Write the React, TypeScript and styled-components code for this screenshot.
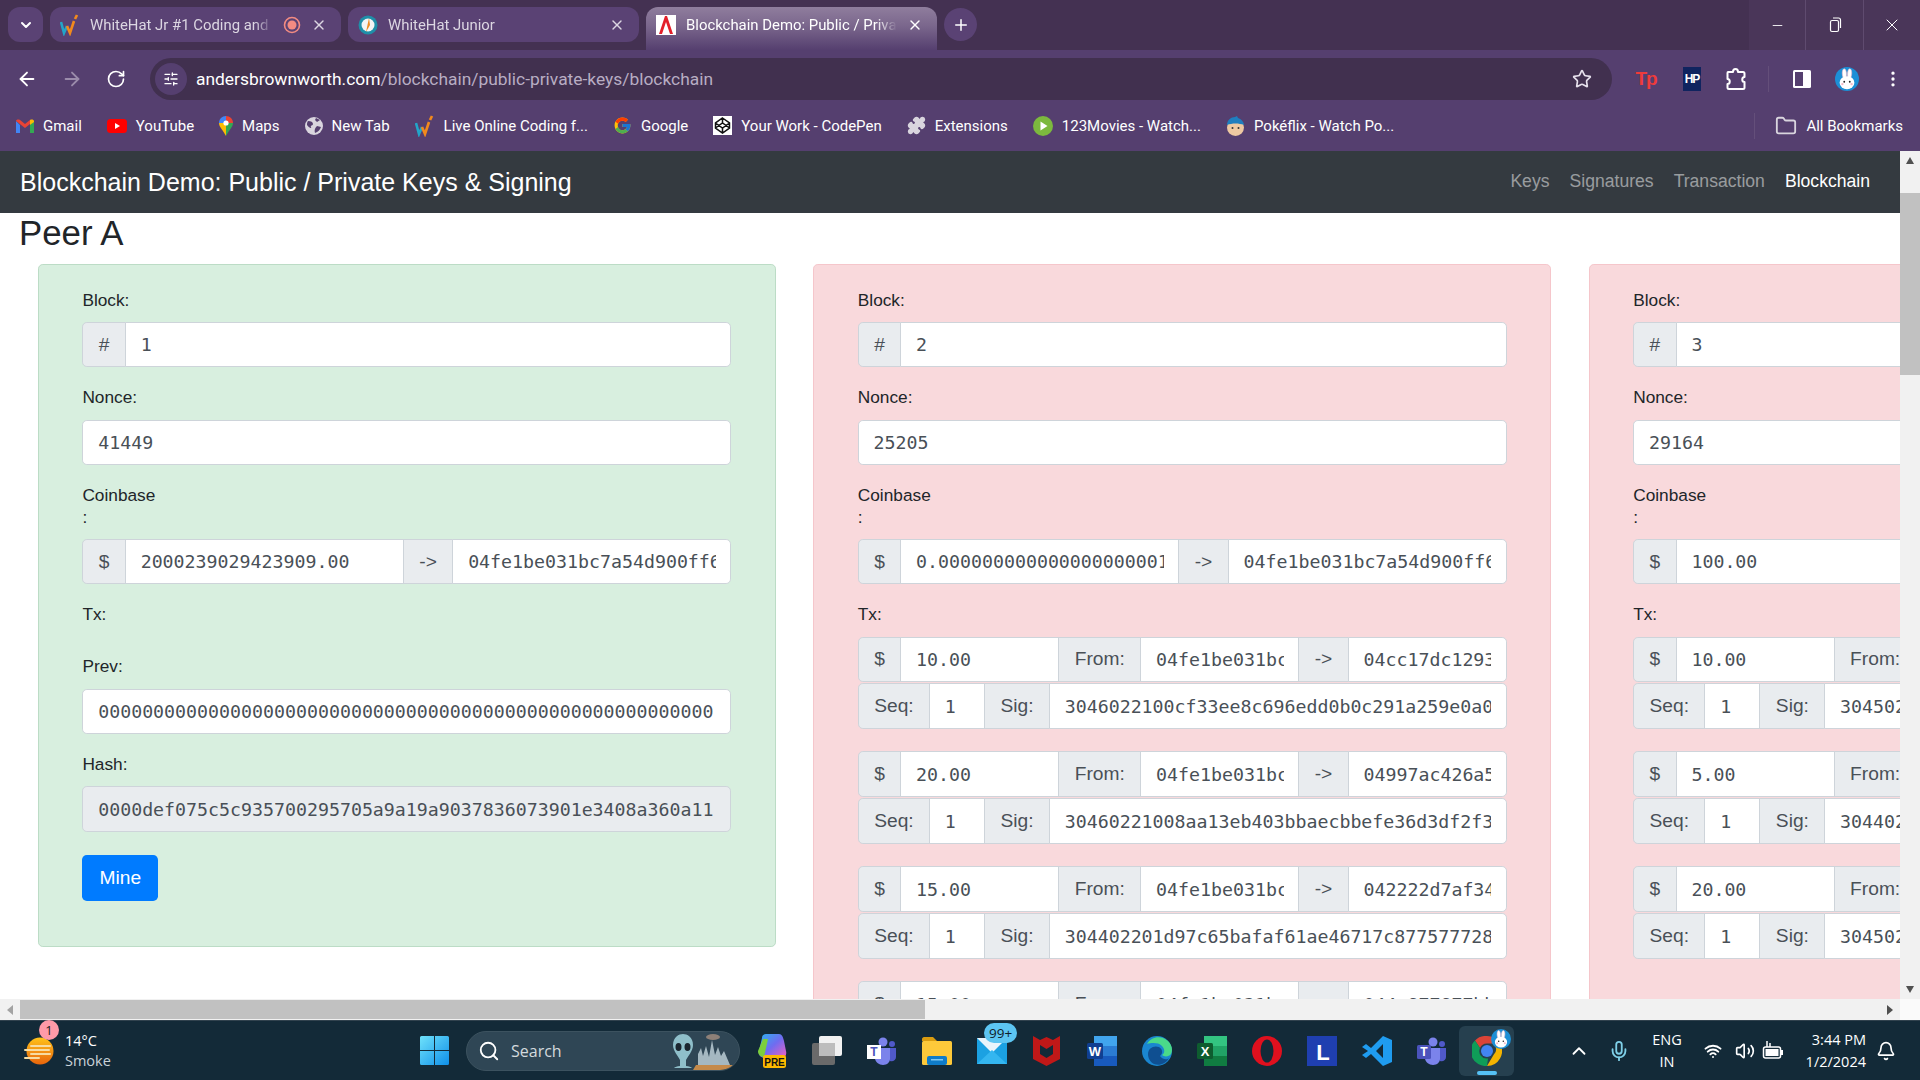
import React, { FC, ReactNode } from 'react';
import styled, { createGlobalStyle } from 'styled-components';
import {
  ArrowLeft,
  ArrowRight,
  Bell,
  ChevronDown,
  ChevronUp,
  Folder,
  Mic,
  Minus,
  MoreVertical,
  Plus,
  Puzzle,
  RotateCw,
  Search,
  SlidersHorizontal,
  Star,
  Volume2,
  Wifi,
  X,
} from 'lucide-react';
import { FcGoogle } from 'react-icons/fc';

const GlobalStyle = createGlobalStyle`
  html, body {
    margin: 0;
    padding: 0;
    overflow: hidden;
  }
  * {
    box-sizing: border-box;
  }
`;

const UI_FONT = `'Open Sans', 'Noto Sans', sans-serif`;
const CHROME_FONT = `Roboto, 'Open Sans', sans-serif`;
const WEB_FONT = `'Liberation Sans', Arial, sans-serif`;
const MONO_FONT = `'DejaVu Sans Mono', monospace`;

// ---- small drawings ----

const WhiteHatIcon: FC = () => (
  <svg width="20" height="22" viewBox="0 0 20 22">
    <path d="M1 8l3 11 3-7" fill="none" stroke="#22a5c9" strokeWidth="2.6" />
    <path d="M7 12l3 7 4-12" fill="none" stroke="#f28a1c" strokeWidth="2.6" />
    <path d="M15 5l2-4" fill="none" stroke="#f28a1c" strokeWidth="2.6" />
  </svg>
);

const JuniorIcon: FC = () => (
  <svg width="20" height="20" viewBox="0 0 20 20">
    <circle cx="10" cy="10" r="9.5" fill="#1f8fa8" />
    <circle cx="10" cy="10" r="6.5" fill="#f4f4f4" />
    <path d="M11 3l-3 14 4-7z" fill="#ee8a22" />
  </svg>
);

const AndersIcon: FC = () => (
  <svg width="20" height="20" viewBox="0 0 20 20">
    <rect width="20" height="20" fill="#fff" />
    <path d="M3 19L9 1h2l6 18h-3L10 7 6 19z" fill="#e3202a" />
  </svg>
);

const RecordIcon: FC = () => (
  <svg width="18" height="18" viewBox="0 0 18 18">
    <circle cx="9" cy="9" r="7.5" fill="none" stroke="#f28b82" strokeWidth="1.6" />
    <circle cx="9" cy="9" r="4.5" fill="#f28b82" />
  </svg>
);

const GmailIcon: FC = () => (
  <svg width="18" height="14" viewBox="0 0 18 14">
    <path d="M0 2v12h4V6z" fill="#4285f4" />
    <path d="M14 14h4V2l-4 4z" fill="#34a853" />
    <path d="M0 2l9 7 5-4V1l-5 4-5-4C2 0 0 1 0 2z" fill="#ea4335" />
    <path d="M14 1v5l4-3V2c0-1-2-2-4-1z" fill="#fbbc04" />
  </svg>
);

const YouTubeIcon: FC = () => (
  <svg width="20" height="14" viewBox="0 0 20 14">
    <rect width="20" height="14" rx="3.5" fill="#f00" />
    <path d="M8 4l5 3-5 3z" fill="#fff" />
  </svg>
);

const MapsIcon: FC = () => (
  <svg width="14" height="20" viewBox="0 0 14 20">
    <path d="M7 0C3 0 0 3 0 7l7 0z" fill="#4285f4" />
    <path d="M7 0c4 0 7 3 7 7H7z" fill="#ea4335" />
    <path d="M0 7c0 4 4 7 7 13V7z" fill="#fbbc04" />
    <path d="M14 7c0 4-4 7-7 13V7z" fill="#34a853" />
    <circle cx="7" cy="7" r="2.6" fill="#fff" />
  </svg>
);

const GlobeIcon: FC = () => (
  <svg width="18" height="18" viewBox="0 0 18 18">
    <circle cx="9" cy="9" r="9" fill="#d9d5de" />
    <path d="M3 4c3 0 5 1 5 3S5 8 6 10s-2 1-4-2c0-1 0-3 1-4zM12 9l4 1c-1 3-3 5-6 6-1-3 0-5 2-7zM11 1l4 2-3 2-2-2z" fill="#553f6f" />
  </svg>
);

const CodePenIcon: FC = () => (
  <svg width="19" height="19" viewBox="0 0 19 19">
    <rect width="19" height="19" fill="#fff" />
    <path d="M9.5 2l7 5v5l-7 5-7-5V7zM2.5 7l7 5 7-5M2.5 12l7-5 7 5M9.5 2v5M9.5 12v5" fill="none" stroke="#111" strokeWidth="1.5" />
  </svg>
);

const MoviesIcon: FC = () => (
  <svg width="20" height="20" viewBox="0 0 20 20">
    <circle cx="10" cy="10" r="10" fill="#7cb93e" />
    <path d="M7.5 5.5l7 4.5-7 4.5z" fill="#fff" />
  </svg>
);

const PokeIcon: FC = () => (
  <svg width="19" height="20" viewBox="0 0 19 20">
    <circle cx="9.5" cy="11.5" r="8.5" fill="#eec9a2" />
    <path d="M1 9c0-5 4-8 8-8l2-1 1 2c3 1 6 4 6 7-5-2-12-2-17 0z" fill="#1f7ebf" />
    <circle cx="6.5" cy="12" r="1" fill="#333" />
    <circle cx="12.5" cy="12" r="1" fill="#333" />
  </svg>
);

const BunnyIcon: FC<{ size: number }> = ({ size }) => (
  <svg width={size} height={size} viewBox="0 0 26 26">
    <circle cx="13" cy="13" r="13" fill="#1c8fd6" />
    <path d="M9 12C7 7 8 2 10 2s3 5 2 10zM17 12c2-5 1-10-1-10s-3 5-2 10z" fill="#fff" stroke="#f3b7c6" strokeWidth=".7" />
    <ellipse cx="13" cy="17" rx="8" ry="7" fill="#fff" />
    <circle cx="10" cy="16" r="1" fill="#222" />
    <circle cx="16" cy="16" r="1" fill="#222" />
    <circle cx="8" cy="18.5" r="1.3" fill="#f7b9c8" />
    <circle cx="18" cy="18.5" r="1.3" fill="#f7b9c8" />
  </svg>
);

const RestoreIcon: FC = () => (
  <svg width="14" height="16" viewBox="0 0 14 16" fill="none" stroke="#fff" strokeWidth="1.2">
    <rect x="2.5" y="3.5" width="8" height="11" rx="1.5" />
    <path d="M5 1h5.500c1.200 0 2 .8 2 2v8" />
  </svg>
);

const SidePanelIcon: FC = () => (
  <svg width="18" height="20" viewBox="0 0 18 20">
    <rect x="0" y="1" width="18" height="18" rx="1.5" fill="#fff" />
    <rect x="2" y="3" width="8" height="14" fill="#553f6f" />
  </svg>
);

const ExtensionPiece: FC = () => (
  <svg width="22" height="24" viewBox="0 0 22 24" fill="none" stroke="#fff" strokeWidth="2" strokeLinejoin="round">
    <path d="M3 5h5c0-4 5-4 5 0h5c1 0 1.500.5 1.500 1.500V10c-3 0-3 5 0 5v5.500c0 1-.5 1.500-1.500 1.500H4c-1 0-1.500-.5-1.500-1.500V17c3 0 3-5 0-5V6c0-.5 0-1 .5-1z" />
  </svg>
);

const WeatherIcon: FC = () => (
  <svg width="32" height="30" viewBox="0 0 32 30">
    <defs>
      <linearGradient id="sun" x1="0" y1="0" x2="0" y2="1">
        <stop offset="0" stopColor="#ffc21a" />
        <stop offset="1" stopColor="#e8650c" />
      </linearGradient>
    </defs>
    <circle cx="16" cy="15" r="13.5" fill="url(#sun)" />
    <path d="M7 10h19M1 14h24M7 18h19M1 22h14" stroke="#f7dca2" strokeWidth="2" strokeLinecap="round" />
  </svg>
);

const WindowsIcon: FC = () => (
  <svg width="29" height="29" viewBox="0 0 29 29">
    <defs>
      <linearGradient id="win" x1="0" y1="0" x2="1" y2="1">
        <stop offset="0" stopColor="#6fe2fb" />
        <stop offset="1" stopColor="#0f8fe8" />
      </linearGradient>
    </defs>
    <path d="M0 1.5A1.5 1.5 0 0 1 1.500 0H14v14H0zM15 0h12.500A1.500 1.500 0 0 1 29 1.500V14H15zM0 15h14v14H1.500A1.500 1.500 0 0 1 0 27.500zM15 15h14v12.500a1.500 1.500 0 0 1-1.500 1.500H15z" fill="url(#win)" />
  </svg>
);

const AlienDoodle: FC = () => (
  <svg width="68" height="38" viewBox="0 0 68 38">
    <path d="M22 38l3-5h38l-5 5z" fill="#c58a4a" />
    <path d="M27 33V22l3-6 2 8 3-10 3 11 3-17 3 15 3-8 3 9 3-5 6 14z" fill="#b3c4cd" opacity=".9" />
    <ellipse cx="42" cy="5" rx="7" ry="3" fill="#8d8078" />
    <path d="M2 13C2 5 8 2 12 2s10 3 10 11c0 6-5 11-7 15v6c3 0 5 1 6 2H3c1-1 3-2 6-2v-6C7 24 2 19 2 13z" fill="#8fbfca" />
    <ellipse cx="7.500" cy="15" rx="3" ry="4" fill="#1b2630" />
    <ellipse cx="16.500" cy="15" rx="3" ry="4" fill="#1b2630" />
  </svg>
);

const Glyph: FC<{ x: string; y: string; size: string; weight?: number; fill: string; children: ReactNode }> = ({
  x,
  y,
  size,
  weight = 700,
  fill,
  children,
}) => (
  <text x={x} y={y} fontSize={size} fontWeight={weight} fill={fill} fontFamily="'Liberation Sans', sans-serif" textAnchor="middle">
    {children}
  </text>
);

const CopilotIcon: FC = () => (
  <svg width="30" height="36" viewBox="0 0 30 36">
    <defs>
      <linearGradient id="cop" x1="0" y1="0" x2="1" y2="1">
        <stop offset="0" stopColor="#2bb3f0" />
        <stop offset=".5" stopColor="#6f6cf0" />
        <stop offset="1" stopColor="#f45fc0" />
      </linearGradient>
    </defs>
    <path d="M9 1h13c3 0 4 3 5 7l2 10c1 4-1 7-4 7H8c-4 0-7-3-6-7L5 5c0-3 2-4 4-4z" fill="url(#cop)" />
    <path d="M1 18l5-12 5 0-4 18c-3 0-6-2-6-6z" fill="#7ccf3c" />
    <rect x="6" y="22" width="23" height="13" rx="2.500" fill="#fdb900" />
    <Glyph x="17.500" y="32.500" size="10" weight={800} fill="#111">PRE</Glyph>
  </svg>
);

const WidgetsIcon: FC = () => (
  <svg width="30" height="30" viewBox="0 0 30 30">
    <rect y="7" width="23" height="22" rx="2" fill="#6a6a6a" />
    <rect x="7" width="23" height="20" rx="2" fill="#f1f1f1" />
    <rect x="7" y="7" width="16" height="13" fill="#bdbdbd" />
  </svg>
);

const TeamsIcon: FC<{ light?: boolean }> = ({ light }) => (
  <svg width="30" height="28" viewBox="0 0 30 28">
    <circle cx="16" cy="5" r="4.500" fill="#7b83eb" />
    <circle cx="25" cy="7" r="3" fill="#5059c9" />
    <path d="M20 11h9v9c0 3-3 5-6 4z" fill="#5059c9" />
    <path d="M8 11h15v11c0 3-3 6-7 6s-8-3-8-7z" fill="#7b83eb" />
    <rect y="8" width="14" height="14" rx={light ? 0 : 1.500} fill={light ? '#fff' : '#4b53bc'} />
    <Glyph x="7" y="19" size="12" fill={light ? '#4b53bc' : '#fff'}>T</Glyph>
  </svg>
);

const ExplorerIcon: FC = () => (
  <svg width="30" height="28" viewBox="0 0 30 28">
    <path d="M0 2c0-1 1-2 2-2h9l4 4H0z" fill="#d99c10" />
    <rect y="4" width="30" height="24" rx="1.500" fill="#fdc93a" />
    <rect x="5" y="19" width="20" height="9" rx="2" fill="#0f7cc9" />
    <rect x="9" y="22" width="12" height="1.500" fill="#7fc8f3" />
  </svg>
);

const MailIcon: FC = () => (
  <svg width="30" height="26" viewBox="0 0 30 26">
    <rect width="30" height="26" fill="#1ba1e2" />
    <path d="M0 0h30L15 15z" fill="#e9f4fb" />
    <path d="M0 26L15 12l15 14z" fill="#34b6f0" />
  </svg>
);

const McAfeeIcon: FC = () => (
  <svg width="27" height="30" viewBox="0 0 27 30">
    <path d="M0 0l7 4 6.500-3L20 4l7-4v23l-13.500 7L0 23zM7 9v9l6.500 4 6.500-4V9l-6.500 4z" fill="#c01818" fillRule="evenodd" />
  </svg>
);

const OfficeTile: FC<{ shades: string[]; badge: string; letter: string }> = ({ shades, badge, letter }) => (
  <svg width="30" height="30" viewBox="0 0 30 30">
    <rect x="7" width="23" height="10" fill={shades[0]} />
    <rect x="7" y="10" width="23" height="10" fill={shades[1]} />
    <rect x="7" y="20" width="23" height="10" fill={shades[2]} />
    <rect y="7" width="16" height="16" rx="1.500" fill={badge} />
    <Glyph x="8" y="19.500" size="13" fill="#fff">{letter}</Glyph>
  </svg>
);

const EdgeIcon: FC = () => (
  <svg width="30" height="30" viewBox="0 0 30 30">
    <circle cx="15" cy="15" r="15" fill="#1a86d0" />
    <path d="M5 8C9 0 20-1 26 5c4 4 5 9 3 13-2 3-7 3-9 1 3-2 3-6 0-9-4-4-11-3-15-2z" fill="#4ad98a" />
    <path d="M6 18c0-6 6-9 11-7 4 2 4 7 1 9 3 4 7 4 9 2-3 6-10 8-15 6-4-2-6-6-6-10z" fill="#0f4f91" />
  </svg>
);

const OperaIcon: FC = () => (
  <svg width="30" height="30" viewBox="0 0 30 30">
    <circle cx="15" cy="15" r="15" fill="#e0101e" />
    <ellipse cx="15" cy="15" rx="6.500" ry="11.500" fill="#132a38" />
  </svg>
);

const LTile: FC = () => (
  <svg width="30" height="30" viewBox="0 0 30 30">
    <rect width="30" height="30" fill="#1f3fb0" />
    <Glyph x="16" y="24" size="22" fill="#fff">L</Glyph>
  </svg>
);

const VsCodeIcon: FC = () => (
  <svg width="30" height="30" viewBox="0 0 30 30">
    <path d="M21 0l9 4v22l-9 4-12-12-5 4-4-3 6-4-6-4 4-3 5 4zM21 8l-7 7 7 7z" fill="#1f9cf0" fillRule="evenodd" />
  </svg>
);

const ChromeIcon: FC = () => (
  <svg width="30" height="30" viewBox="0 0 30 30">
    <path d="M15 0a15 15 0 0 1 13 7.500H15a7.500 7.500 0 0 0-7 4.500L3 4.500A15 15 0 0 1 15 0z" fill="#db4437" />
    <path d="M28 7.500A15 15 0 0 1 15 30l6.500-11a7.500 7.500 0 0 0 0-11.500z" fill="#f4b400" />
    <path d="M3 4.500l5 7.500a7.500 7.500 0 0 0 8 10.500L15 30A15 15 0 0 1 3 4.500z" fill="#0f9d58" />
    <circle cx="15" cy="15" r="6" fill="#4285f4" />
  </svg>
);

const BatteryIcon: FC = () => (
  <svg width="22" height="22" viewBox="0 0 22 22">
    <rect x="1.500" y="7" width="17" height="11" rx="2" fill="none" stroke="#fff" strokeWidth="1.500" />
    <rect x="3.500" y="9" width="13" height="7" fill="#fff" />
    <rect x="19" y="10" width="2" height="5" fill="#fff" />
    <path d="M5 1v6M8 3v4" stroke="#fff" strokeWidth="1.500" />
  </svg>
);

const ScrollArrow: FC<{ $dir: 'up' | 'down' | 'left' | 'right'; $dark?: boolean }> = ({ $dir, $dark }) => {
  const points = { up: '5,1 9,8 1,8', down: '1,2 9,2 5,9', left: '8,0 8,10 2,5', right: '2,0 2,10 8,5' };
  return (
    <svg width="10" height="10" viewBox="0 0 10 10">
      <polygon points={points[$dir]} fill={$dark ? '#505050' : '#a3a3a3'} />
    </svg>
  );
};

// ---- browser chrome ----

const Screen = styled.div`
  width: 1920px;
  height: 1080px;
  display: flex;
  flex-direction: column;
  overflow: hidden;
  background: #fff;
`;

const TabStrip = styled.div`
  height: 50px;
  flex: none;
  background: #443152;
  display: flex;
  align-items: flex-start;
  padding-left: 8px;
`;

const TabList = styled.button`
  all: unset;
  width: 35px;
  height: 35px;
  margin-top: 7px;
  margin-right: 7px;
  background: #5a4274;
  border-radius: 12px;
  color: #fff;
  display: flex;
  align-items: center;
  justify-content: center;
`;

const Tab = styled.div<{ $active?: boolean }>`
  width: 291px;
  height: ${(p) => (p.$active ? '43px' : '35px')};
  margin-top: 7px;
  margin-right: 7px;
  padding: 0 14px 0 10px;
  background: ${(p) => (p.$active ? 'linear-gradient(#8f7d9d, #7a668c 45%, #553f6f)' : '#5a4274')};
  border-radius: ${(p) => (p.$active ? '12px 12px 0 0' : '12px')};
  color: ${(p) => (p.$active ? '#fff' : '#dcd6e2')};
  font: 14.9px ${CHROME_FONT};
  display: flex;
  align-items: center;
  gap: 10px;
  padding-bottom: ${(p) => (p.$active ? '8px' : '0')};
`;

const TabTitle = styled.span`
  flex: 1;
  overflow: hidden;
  white-space: nowrap;
  mask-image: linear-gradient(to right, #000 90%, transparent);
`;

const NewTab = styled.div`
  width: 33px;
  height: 33px;
  margin-top: 8px;
  border-radius: 50%;
  background: #5a4274;
  color: #fff;
  display: flex;
  align-items: center;
  justify-content: center;
`;

const WindowControls = styled.div`
  margin-left: auto;
  height: 50px;
  display: flex;
  background: #4a3659;
`;

const WindowButton = styled.div<{ $w: number; $divider?: boolean }>`
  width: ${(p) => p.$w}px;
  display: flex;
  align-items: center;
  justify-content: center;
  color: #fff;
  border-right: ${(p) => (p.$divider ? '1px solid #5f4b6f' : 'none')};
`;

const Toolbar = styled.div`
  height: 50px;
  flex: none;
  background: #553f6f;
  padding-top: 8px;
  display: flex;
  align-items: flex-start;
`;

const NavIcons = styled.div`
  width: 150px;
  height: 42px;
  padding-left: 16px;
  display: flex;
  align-items: center;
  gap: 23px;
  flex: none;
`;

const Omnibox = styled.div`
  width: 1462px;
  height: 42px;
  background: #41304f;
  border-radius: 21px;
  display: flex;
  align-items: center;
  padding: 0 20px 0 5px;
  flex: none;
`;

const SiteInfo = styled.div`
  width: 32px;
  height: 32px;
  border-radius: 50%;
  background: #553f6f;
  color: #fff;
  display: flex;
  align-items: center;
  justify-content: center;
  margin-right: 9px;
`;

const Url = styled.div`
  flex: 1;
  font: 17.4px ${CHROME_FONT};
  color: #b8adc3;
  white-space: nowrap;
`;

const UrlHost = styled.span`
  color: #fff;
`;

const ToolbarIcons = styled.div`
  flex: 1;
  height: 42px;
  display: flex;
  align-items: center;
`;

const ToolbarSlot = styled.div<{ $w: number }>`
  width: ${(p) => p.$w}px;
  flex: none;
  display: flex;
  justify-content: center;
  align-items: center;
`;

const ExtensionText = styled.span<{ $box?: boolean }>`
  font: 700 ${(p) => (p.$box ? '12px' : '19px')} ${WEB_FONT};
  color: ${(p) => (p.$box ? '#fff' : '#ef3b3b')};
  background: ${(p) => (p.$box ? '#10245f' : 'transparent')};
  padding: ${(p) => (p.$box ? '5px 2px' : '0')};
  letter-spacing: -1px;
`;

const ToolbarDivider = styled.div`
  width: 1px;
  height: 26px;
  flex: none;
  background: #644f7a;
`;

const BookmarkBar = styled.div`
  height: 51px;
  flex: none;
  background: #553f6f;
  display: flex;
  align-items: center;
  padding: 0 17px 0 16px;
  gap: 25px;
`;

const Bookmark = styled.div`
  display: flex;
  align-items: center;
  gap: 9px;
  font: 15px ${CHROME_FONT};
  color: #fff;
  white-space: nowrap;
`;

const BookmarkEnd = styled(Bookmark)`
  margin-left: auto;
  padding-left: 20px;
  border-left: 1px solid #644f7a;
  height: 26px;
`;

// ---- page ----

const Viewport = styled.div`
  flex: 1;
  min-height: 0;
  display: flex;
`;

const PageArea = styled.div`
  flex: 1;
  min-width: 0;
  overflow: hidden;
  font-family: ${WEB_FONT};
`;

const SiteNav = styled.nav`
  height: 62px;
  background: #343a40;
  display: flex;
  align-items: center;
  justify-content: space-between;
  padding: 0 30px 0 20px;
`;

const Brand = styled.div`
  font-size: 25px;
  color: #fff;
`;

const NavLinks = styled.div`
  display: flex;
  gap: 20px;
  font-size: 17.6px;
  margin-bottom: 2px;
`;

const NavLink = styled.a<{ $active?: boolean }>`
  color: ${(p) => (p.$active ? '#fff' : 'rgba(255, 255, 255, 0.5)')};
`;

const PeerTitle = styled.h3`
  margin: 0 0 11px 19px;
  font-size: 34.8px;
  font-weight: 400;
  line-height: 40px;
  color: #212529;
`;

const Cards = styled.div`
  display: flex;
  gap: 37.4px;
  padding-left: 38px;
  width: max-content;
  align-items: flex-start;
`;

const Card = styled.div<{ $valid?: boolean }>`
  width: 738px;
  padding: 24px 43.6px 45px 43.4px;
  border-radius: 4.8px;
  background: ${(p) => (p.$valid ? '#d8efdf' : '#f9d9dc')};
  border: 1px solid ${(p) => (p.$valid ? '#bcdcc6' : '#f5c6cb')};
`;

const Label = styled.label`
  display: block;
  padding-top: 0.8px;
  font-size: 17.28px;
  line-height: 21.6px;
  margin-bottom: 10.5px;
  color: #212529;
`;

const FormGroup = styled.div`
  display: flow-root;
  margin-bottom: 19.2px;
`;

const InputGroup = styled.div<{ $tight?: boolean }>`
  display: flex;
  height: 45.6px;
  margin-bottom: ${(p) => (p.$tight ? '1.4px' : '0')};
`;

const TxGroup = styled.div`
  margin-bottom: 22.4px;
`;

const Addon = styled.div`
  flex: none;
  display: flex;
  align-items: center;
  padding: 0 15.4px;
  font-size: 19.2px;
  color: #495057;
  background: #e9ecef;
  border: 1px solid #ced4da;
  margin-left: -1px;
  &:first-child {
    margin-left: 0;
    border-radius: 4.8px 0 0 4.8px;
  }
`;

const Field = styled.div<{ $w?: number; $readonly?: boolean }>`
  flex: ${(p) => (p.$w ? `0 0 ${p.$w}px` : '1 1 0')};
  min-width: 0;
  display: flex;
  align-items: center;
  padding: 0 14.8px;
  background: ${(p) => (p.$readonly ? '#e9ecef' : '#fff')};
  border: 1px solid #ced4da;
  margin-left: -1px;
  font: 18.25px ${MONO_FONT};
  color: #495057;
  &:first-child {
    margin-left: 0;
    border-top-left-radius: 4.8px;
    border-bottom-left-radius: 4.8px;
  }
  &:last-child {
    border-top-right-radius: 4.8px;
    border-bottom-right-radius: 4.8px;
  }
  &:only-child {
    padding-right: 17px;
  }
`;

const FieldText = styled.span`
  display: block;
  overflow: hidden;
  white-space: nowrap;
`;

const MineButton = styled.button`
  display: block;
  width: 76px;
  height: 46.6px;
  margin-top: 23px;
  padding: 0;
  border: none;
  border-radius: 4.8px;
  background: #007bff;
  color: #fff;
  font: 19.2px ${WEB_FONT};
`;

const VScroll = styled.div`
  width: 20px;
  flex: none;
  background: #f1f1f1;
  display: flex;
  flex-direction: column;
  align-items: center;
`;

const VArrow = styled.div`
  height: 20px;
  display: flex;
  align-items: center;
  justify-content: center;
`;

const VThumb = styled.div`
  width: 100%;
  height: 182px;
  margin-top: 22px;
  margin-bottom: auto;
  background: #c1c1c1;
`;

const HScroll = styled.div`
  height: 21px;
  flex: none;
  display: flex;
  background: #f1f1f1;
  align-items: stretch;
`;

const HArrow = styled.div`
  width: 20px;
  flex: none;
  display: flex;
  align-items: center;
  justify-content: center;
`;

const HThumb = styled.div`
  width: 905px;
  background: #c1c1c1;
  margin: 1px 0;
`;

const HTrack = styled.div`
  flex: 1;
`;

const HCorner = styled.div`
  width: 20px;
  flex: none;
  background: #fafafa;
`;

// ---- taskbar ----

const Taskbar = styled.div`
  height: 60px;
  flex: none;
  background: #132a38;
  border-top: 1px solid #31424e;
  display: flex;
  align-items: center;
  font-family: ${UI_FONT};
  color: #fff;
`;

const Weather = styled.div`
  width: 420px;
  flex: none;
  padding-left: 24px;
  display: flex;
  align-items: center;
  gap: 9px;
  position: relative;
`;

const WeatherBadge = styled.span`
  position: absolute;
  left: 39px;
  top: -11px;
  width: 20px;
  height: 20px;
  border-radius: 50%;
  background: #ff9aa8;
  color: #222;
  font-size: 13px;
  display: flex;
  align-items: center;
  justify-content: center;
`;

const WeatherText = styled.div`
  font-size: 14.5px;
  line-height: 20px;
`;

const WeatherSub = styled.div`
  color: #c9d2d8;
`;

const SearchPill = styled.div`
  width: 274px;
  height: 40px;
  margin-left: 17px;
  margin-right: 4px;
  border-radius: 20px;
  background: #2f4655;
  border: 1px solid #3c525f;
  display: flex;
  align-items: center;
  padding-left: 11px;
  gap: 11px;
  font-size: 16px;
  color: #d3dade;
  flex: none;
  overflow: hidden;
`;

const SearchLabel = styled.span`
  flex: 1;
`;

const TaskIcon = styled.div<{ $running?: boolean }>`
  width: 55px;
  height: 50px;
  flex: none;
  display: flex;
  align-items: center;
  justify-content: center;
  position: relative;
  border-radius: 6px;
  background: ${(p) => (p.$running ? '#26404f' : 'transparent')};
`;

const CountBadge = styled.span`
  position: absolute;
  top: -3px;
  left: 20px;
  padding: 0 5px;
  height: 20px;
  border-radius: 10px;
  background: #5cc5f2;
  color: #10202a;
  font-size: 13.5px;
  line-height: 20px;
`;

const BunnyBadge = styled.span`
  position: absolute;
  top: 3px;
  right: 3px;
  line-height: 0;
`;

const RunIndicator = styled.span`
  position: absolute;
  bottom: 1px;
  left: 50%;
  margin-left: -10px;
  width: 20px;
  height: 4px;
  border-radius: 2px;
  background: #55c1f5;
`;

const Tray = styled.div`
  margin-left: auto;
  display: flex;
  align-items: center;
  padding-right: 17px;
`;

const TraySlot = styled.div<{ $w: number }>`
  width: ${(p) => p.$w}px;
  flex: none;
  display: flex;
  align-items: center;
  justify-content: center;
  color: #fff;
`;

const Lang = styled.div`
  width: 58px;
  text-align: center;
  font-size: 14.5px;
  line-height: 22px;
`;

const Clock = styled.div`
  width: 80px;
  margin-right: 3px;
  text-align: right;
  font-size: 14.5px;
  line-height: 22px;
`;

// ---- data ----

type Tx = { amount: string; to: string; sig: string };
type BlockData = {
  id: number;
  nonce: string;
  coinbase: string;
  valid?: boolean;
  prev?: string;
  hash?: string;
  txs: Tx[];
};

const FROM = '04fe1be031bc7a54d900ff6e2b7a';

const blocks: BlockData[] = [
  {
    id: 1,
    nonce: '41449',
    coinbase: '2000239029423909.00',
    valid: true,
    prev: '0000000000000000000000000000000000000000000000000000000000000000',
    hash: '0000def075c5c935700295705a9a19a9037836073901e3408a360a11a2f4c7e9',
    txs: [],
  },
  {
    id: 2,
    nonce: '25205',
    coinbase: '0.00000000000000000000112',
    txs: [
      { amount: '10.00', to: '04cc17dc1293ab4', sig: '3046022100cf33ee8c696edd0b0c291a259e0a0b3f1c' },
      { amount: '20.00', to: '04997ac426a5c1e', sig: '30460221008aa13eb403bbaecbbefe36d3df2f3a91d7' },
      { amount: '15.00', to: '042222d7af34e8b', sig: '304402201d97c65bafaf61ae46717c87757772880c1d' },
      { amount: '15.00', to: '044e877877bb0c2', sig: '3044022033ab0e9c17d5a6f8823e1f0d2c4b7a9e16f0' },
    ],
  },
  {
    id: 3,
    nonce: '29164',
    coinbase: '100.00',
    txs: [
      { amount: '10.00', to: '04cc17dc1293ab4', sig: '30450221009ab7c3e18d4f' },
      { amount: '5.00', to: '04997ac426a5c1e', sig: '304402207ce4ab1903df' },
      { amount: '20.00', to: '042222d7af34e8b', sig: '30450221004ef17a09c3bd' },
    ],
  },
];

const bookmarks: { name: string; icon: ReactNode }[] = [
  { name: 'Gmail', icon: <GmailIcon /> },
  { name: 'YouTube', icon: <YouTubeIcon /> },
  { name: 'Maps', icon: <MapsIcon /> },
  { name: 'New Tab', icon: <GlobeIcon /> },
  { name: 'Live Online Coding f...', icon: <WhiteHatIcon /> },
  { name: 'Google', icon: <FcGoogle size={19} /> },
  { name: 'Your Work - CodePen', icon: <CodePenIcon /> },
  { name: 'Extensions', icon: <Puzzle size={19} fill="#d9d5de" color="#d9d5de" /> },
  { name: '123Movies - Watch...', icon: <MoviesIcon /> },
  { name: 'Pokéflix - Watch Po...', icon: <PokeIcon /> },
];

// ---- page parts ----

const Mono: FC<{ children: ReactNode; $w?: number; $readonly?: boolean }> = ({ children, $w, $readonly }) => (
  <Field $w={$w} $readonly={$readonly}>
    <FieldText>{children}</FieldText>
  </Field>
);

const BlockCard: FC<{ block: BlockData }> = ({ block }) => (
  <Card $valid={block.valid}>
    <FormGroup>
      <Label>Block:</Label>
      <InputGroup>
        <Addon>#</Addon>
        <Mono>{block.id}</Mono>
      </InputGroup>
    </FormGroup>
    <FormGroup>
      <Label>Nonce:</Label>
      <InputGroup>
        <Mono>{block.nonce}</Mono>
      </InputGroup>
    </FormGroup>
    <FormGroup>
      <Label>
        Coinbase
        <br />:
      </Label>
      <InputGroup>
        <Addon>$</Addon>
        <Mono>{block.coinbase}</Mono>
        <Addon>-&gt;</Addon>
        <Mono>{FROM}</Mono>
      </InputGroup>
    </FormGroup>
    <FormGroup>
      <Label>Tx:</Label>
      {block.txs.map((tx) => (
        <TxGroup key={tx.sig}>
          <InputGroup $tight>
            <Addon>$</Addon>
            <Mono>{tx.amount}</Mono>
            <Addon>From:</Addon>
            <Mono>{FROM}</Mono>
            <Addon>-&gt;</Addon>
            <Mono>{tx.to}</Mono>
          </InputGroup>
          <InputGroup>
            <Addon>Seq:</Addon>
            <Mono $w={56}>1</Mono>
            <Addon>Sig:</Addon>
            <Mono>{tx.sig}</Mono>
          </InputGroup>
        </TxGroup>
      ))}
    </FormGroup>
    {block.prev && (
      <FormGroup>
        <Label>Prev:</Label>
        <InputGroup>
          <Mono>{block.prev}</Mono>
        </InputGroup>
      </FormGroup>
    )}
    {block.hash && (
      <FormGroup>
        <Label>Hash:</Label>
        <InputGroup>
          <Mono $readonly>{block.hash}</Mono>
        </InputGroup>
      </FormGroup>
    )}
    <MineButton>Mine</MineButton>
  </Card>
);

const App: FC = () => {
  return (
    <Screen>
      <GlobalStyle />
      <TabStrip>
        <TabList>
          <ChevronDown size={16} strokeWidth={3} />
        </TabList>
        <Tab>
          <WhiteHatIcon />
          <TabTitle>WhiteHat Jr #1 Coding and</TabTitle>
          <RecordIcon />
          <X size={16} />
        </Tab>
        <Tab>
          <JuniorIcon />
          <TabTitle>WhiteHat Junior</TabTitle>
          <X size={16} />
        </Tab>
        <Tab $active>
          <AndersIcon />
          <TabTitle>Blockchain Demo: Public / Private Keys</TabTitle>
          <X size={16} color="#fff" />
        </Tab>
        <NewTab>
          <Plus size={18} />
        </NewTab>
        <WindowControls>
          <WindowButton $w={57} $divider>
            <Minus size={15} strokeWidth={1.4} />
          </WindowButton>
          <WindowButton $w={58} $divider>
            <RestoreIcon />
          </WindowButton>
          <WindowButton $w={56}>
            <X size={20} strokeWidth={1.2} />
          </WindowButton>
        </WindowControls>
      </TabStrip>

      <Toolbar>
        <NavIcons>
          <ArrowLeft size={22} color="#fff" />
          <ArrowRight size={22} color="#9b8cab" />
          <RotateCw size={20} color="#fff" />
        </NavIcons>
        <Omnibox>
          <SiteInfo>
            <SlidersHorizontal size={16} />
          </SiteInfo>
          <Url>
            <UrlHost>andersbrownworth.com</UrlHost>/blockchain/public-private-keys/blockchain
          </Url>
          <Star size={20} color="#e6e0ec" />
        </Omnibox>
        <ToolbarIcons>
          <ToolbarSlot $w={68}>
            <ExtensionText>Tp</ExtensionText>
          </ToolbarSlot>
          <ToolbarSlot $w={24}>
            <ExtensionText $box>HP</ExtensionText>
          </ToolbarSlot>
          <ToolbarSlot $w={64}>
            <ExtensionPiece />
          </ToolbarSlot>
          <ToolbarDivider />
          <ToolbarSlot $w={66}>
            <SidePanelIcon />
          </ToolbarSlot>
          <ToolbarSlot $w={24}>
            <BunnyIcon size={26} />
          </ToolbarSlot>
          <ToolbarSlot $w={68}>
            <MoreVertical size={20} color="#fff" />
          </ToolbarSlot>
        </ToolbarIcons>
      </Toolbar>

      <BookmarkBar>
        {bookmarks.map((b) => (
          <Bookmark key={b.name}>
            {b.icon}
            {b.name}
          </Bookmark>
        ))}
        <BookmarkEnd>
          <Folder size={22} color="#d9d5de" />
          All Bookmarks
        </BookmarkEnd>
      </BookmarkBar>

      <Viewport>
        <PageArea>
          <SiteNav>
            <Brand>Blockchain Demo: Public / Private Keys &amp; Signing</Brand>
            <NavLinks>
              <NavLink>Keys</NavLink>
              <NavLink>Signatures</NavLink>
              <NavLink>Transaction</NavLink>
              <NavLink $active>Blockchain</NavLink>
            </NavLinks>
          </SiteNav>
          <PeerTitle>Peer A</PeerTitle>
          <Cards>
            {blocks.map((block) => (
              <BlockCard key={block.id} block={block} />
            ))}
          </Cards>
        </PageArea>
        <VScroll>
          <VArrow>
            <ScrollArrow $dir="up" $dark />
          </VArrow>
          <VThumb />
          <VArrow>
            <ScrollArrow $dir="down" $dark />
          </VArrow>
        </VScroll>
      </Viewport>
      <HScroll>
        <HArrow>
          <ScrollArrow $dir="left" />
        </HArrow>
        <HThumb />
        <HTrack />
        <HArrow>
          <ScrollArrow $dir="right" $dark />
        </HArrow>
        <HCorner />
      </HScroll>

      <Taskbar>
        <Weather>
          <WeatherIcon />
          <WeatherBadge>1</WeatherBadge>
          <WeatherText>
            14°C
            <WeatherSub>Smoke</WeatherSub>
          </WeatherText>
        </Weather>
        <WindowsIcon />
        <SearchPill>
          <Search size={22} color="#fff" />
          <SearchLabel>Search</SearchLabel>
          <AlienDoodle />
        </SearchPill>
        <TaskIcon>
          <CopilotIcon />
        </TaskIcon>
        <TaskIcon>
          <WidgetsIcon />
        </TaskIcon>
        <TaskIcon>
          <TeamsIcon light />
        </TaskIcon>
        <TaskIcon>
          <ExplorerIcon />
        </TaskIcon>
        <TaskIcon>
          <MailIcon />
          <CountBadge>99+</CountBadge>
        </TaskIcon>
        <TaskIcon>
          <McAfeeIcon />
        </TaskIcon>
        <TaskIcon>
          <OfficeTile shades={['#41a5ee', '#2b7cd3', '#185abd']} badge="#103f91" letter="W" />
        </TaskIcon>
        <TaskIcon>
          <EdgeIcon />
        </TaskIcon>
        <TaskIcon>
          <OfficeTile shades={['#33c481', '#21a366', '#107c41']} badge="#0e5c2f" letter="X" />
        </TaskIcon>
        <TaskIcon>
          <OperaIcon />
        </TaskIcon>
        <TaskIcon>
          <LTile />
        </TaskIcon>
        <TaskIcon>
          <VsCodeIcon />
        </TaskIcon>
        <TaskIcon>
          <TeamsIcon />
        </TaskIcon>
        <TaskIcon $running>
          <ChromeIcon />
          <BunnyBadge>
            <BunnyIcon size={20} />
          </BunnyBadge>
          <RunIndicator />
        </TaskIcon>
        <Tray>
          <TraySlot $w={42}>
            <ChevronUp size={22} />
          </TraySlot>
          <TraySlot $w={38}>
            <Mic size={22} color="#7fd0e8" />
          </TraySlot>
          <Lang>
            ENG
            <br />
            IN
          </Lang>
          <TraySlot $w={34}>
            <Wifi size={18} strokeWidth={2.6} />
          </TraySlot>
          <TraySlot $w={30}>
            <Volume2 size={20} />
          </TraySlot>
          <TraySlot $w={26}>
            <BatteryIcon />
          </TraySlot>
          <Clock>
            3:44 PM
            <br />
            1/2/2024
          </Clock>
          <TraySlot $w={34}>
            <Bell size={20} />
          </TraySlot>
        </Tray>
      </Taskbar>
    </Screen>
  );
};

export default App;
